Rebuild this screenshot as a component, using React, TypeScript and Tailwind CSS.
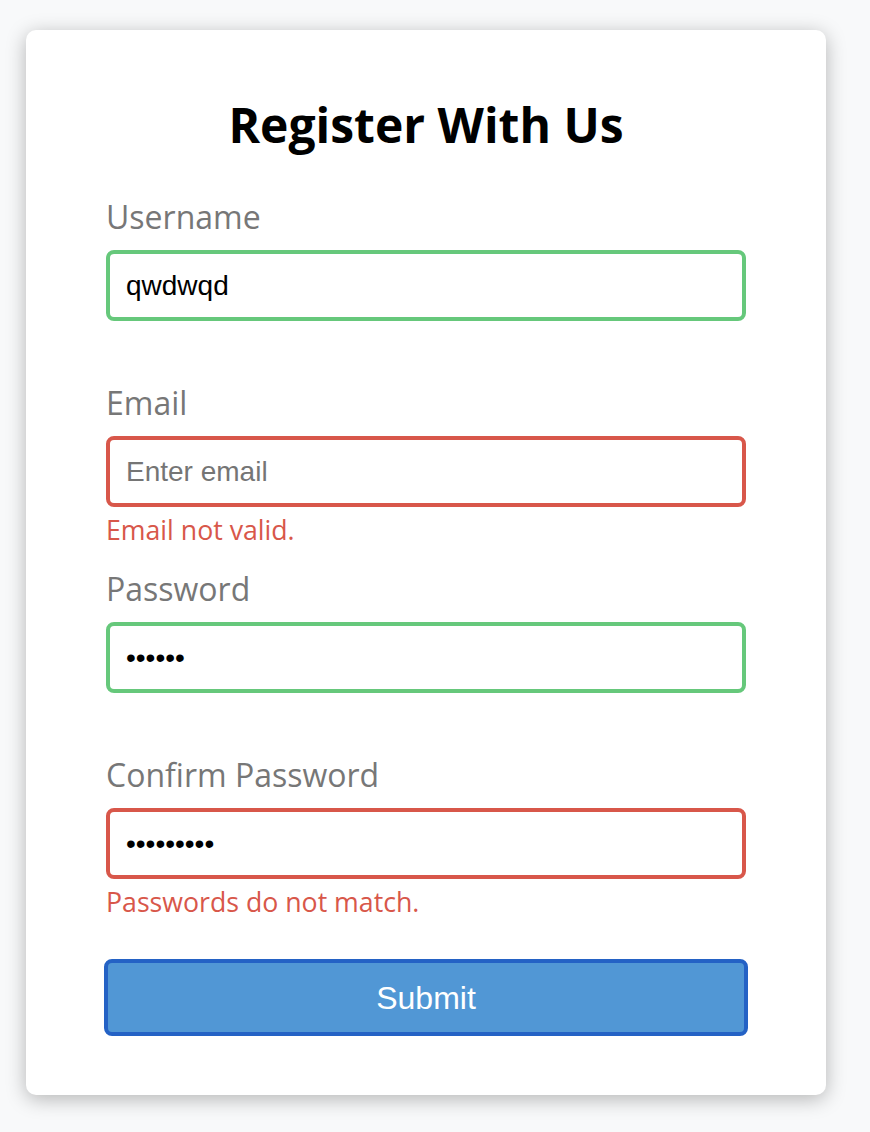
import React from "react";

interface FieldProps {
  label: string;
  type?: string;
  value?: string;
  placeholder?: string;
  status: "ok" | "error";
  message?: string;
}

function Field({ label, type = "text", value, placeholder, status, message }: FieldProps) {
  const border = status === "ok" ? "border-[#66c87b]" : "border-[#d8574a]";
  return (
    <div className="mb-[18px]">
      <label className="block text-[32px] leading-[44px] text-[#777777] font-['Open_Sans',sans-serif]">
        {label}
      </label>
      <input
        type={type}
        defaultValue={value}
        placeholder={placeholder}
        readOnly
        className={`mt-[11px] block w-full h-[71px] border-4 ${border} rounded-[8px] px-[16px] text-[28px] text-black placeholder:text-[#757575] font-['Liberation_Sans',Arial,sans-serif] outline-none`}
      />
      <small
        className={`mt-[3px] block text-[26.7px] leading-[39px] text-[#d8574a] font-['Open_Sans',sans-serif] ${
          message ? "visible" : "invisible"
        }`}
      >
        {message || "Error message"}
      </small>
    </div>
  );
}

export default function App() {
  return (
    <div className="min-h-screen bg-[#f8f9fa] pl-[26px] pt-[30px] pb-[30px]">
      <div className="w-[800px] bg-white rounded-[10px] shadow-[0_4px_20px_rgba(0,0,0,0.28)] pt-[62px] pb-[59px] px-[80px]">
        <h2 className="text-center text-[48px] leading-[65px] font-bold text-black font-['Open_Sans',sans-serif]">
          Register With Us
        </h2>
        <form className="mt-[38px] flex flex-col" onSubmit={(e) => e.preventDefault()}>
          <Field label="Username" value="qwdwqd" status="ok" />
          <Field label="Email" placeholder="Enter email" status="error" message="Email not valid." />
          <Field label="Password" type="password" value="aaaaaa" status="ok" />
          <Field
            label="Confirm Password"
            type="password"
            value="aaaaaaaaa"
            status="error"
            message="Passwords do not match."
          />
          <button
            type="submit"
            className="mt-[20px] -mx-[2px] block w-[644px] h-[77px] bg-[#5197d5] border-4 border-[#2462c5] rounded-[8px] text-white text-[32px] font-['Liberation_Sans',Arial,sans-serif]"
          >
            Submit
          </button>
        </form>
      </div>
    </div>
  );
}
